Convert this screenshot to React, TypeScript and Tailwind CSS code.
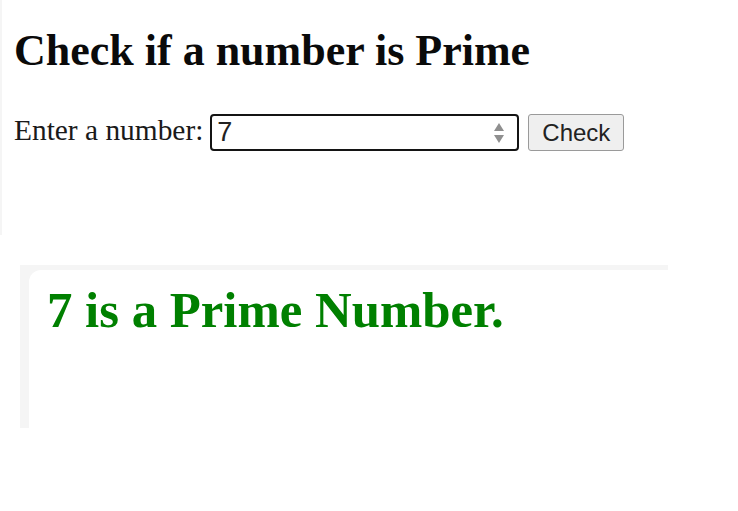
import React from "react";

const Spinner = () => (
  <svg width="12" height="24" viewBox="0 0 12 24" className="shrink-0">
    <path d="M6 2 L11 10 L1 10 Z" fill="#8f8f8f" />
    <path d="M6 22 L11 14 L1 14 Z" fill="#8f8f8f" />
  </svg>
);

export default function App() {
  return (
    <div className="w-[738px] h-[511px] bg-white overflow-hidden font-['Liberation_Serif',serif]">
      {/* top form area */}
      <div className="h-[235px] border-l-2 border-[#f5f5f5] pl-[12px] pt-[27px]">
        <h1 className="text-[44px] leading-[48px] font-bold text-[#0a0a0a]">
          Check if a number is Prime
        </h1>
        <div className="mt-[39px] flex items-start">
          <label className="text-[29.4px] leading-[32px] text-[#1a1a1a]">Enter a number:</label>
          <div className="ml-[7px] w-[309px] h-[37px] border-2 border-[#141414] rounded-[4px] flex items-center pl-[5px] pr-[12px]">
            <span className="flex-1 font-['Liberation_Sans',sans-serif] text-[27px] leading-none text-[#222]">7</span>
            <Spinner />
          </div>
          <button className="ml-[9px] w-[96px] h-[37px] bg-[#efefef] border border-[#9a9a9a] rounded-[3px] font-['Liberation_Sans',sans-serif] text-[24px] leading-none text-[#222]">
            Check
          </button>
        </div>
      </div>

      {/* result card */}
      <div className="mt-[30px] ml-[20px] w-[648px] h-[163px] bg-[#f5f5f5] pt-[5px] pl-[9px]">
        <div className="w-full h-full bg-white rounded-tl-[12px] pl-[18px] pt-[12px]">
          <h2 className="text-[50.8px] leading-[56px] font-bold text-[#008000]">7 is a Prime Number.</h2>
        </div>
      </div>
    </div>
  );
}
